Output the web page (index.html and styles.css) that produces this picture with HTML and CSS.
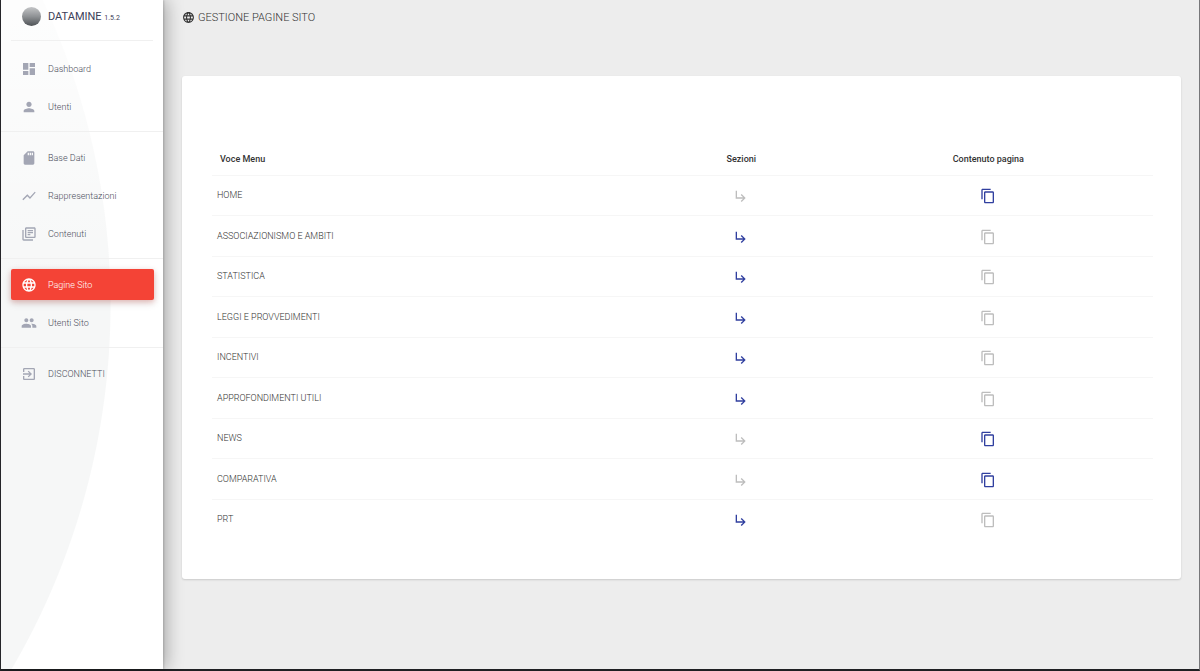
FILE: index.html
```html
<!DOCTYPE html>
<html lang="it">
<head>
  <meta charset="UTF-8">
  <meta name="viewport" content="width=device-width, initial-scale=1.0">
  <title>Datamine - Gestione pagine sito</title>
  <link rel="stylesheet" href="styles.css">
</head>
<body>
  <svg class="sprite" aria-hidden="true">
    <symbol id="i-dashboard" viewBox="0 0 24 24"><path d="M3 13h8V3H3v10zm0 8h8v-6H3v6zm10 0h8V11h-8v10zm0-18v6h8V3h-8z"/></symbol>
    <symbol id="i-person" viewBox="0 0 24 24"><path d="M12 12c2.21 0 4-1.79 4-4s-1.79-4-4-4-4 1.79-4 4 1.79 4 4 4zm0 2c-2.67 0-8 1.34-8 4v2h16v-2c0-2.66-5.33-4-8-4z"/></symbol>
    <symbol id="i-storage" viewBox="0 0 24 24"><path d="M18 2h-8L4.02 8 4 20c0 1.1.9 2 2 2h12c1.1 0 2-.9 2-2V4c0-1.1-.9-2-2-2zm-6 6h-2V4h2v4zm3 0h-2V4h2v4zm3 0h-2V4h2v4z"/></symbol>
    <symbol id="i-chart" viewBox="0 0 24 24"><path d="M3.5 18.49l6-6.01 4 4L22 6.92l-1.41-1.41-7.09 7.97-4-4L2 16.99z"/></symbol>
    <symbol id="i-library" viewBox="0 0 24 24"><path d="M4 6H2v14c0 1.1.9 2 2 2h14v-2H4V6zm16-4H8c-1.1 0-2 .9-2 2v12c0 1.1.9 2 2 2h12c1.1 0 2-.9 2-2V4c0-1.1-.9-2-2-2zm0 14H8V4h12v12zM10 9h8v2h-8V9zm0 3h4v2h-4v-2zm0-6h8v2h-8V6z"/></symbol>
    <symbol id="i-language" viewBox="0 0 24 24"><path d="M11.99 2C6.47 2 2 6.48 2 12s4.47 10 9.99 10C17.52 22 22 17.52 22 12S17.52 2 11.99 2zm6.93 6h-2.95c-.32-1.25-.78-2.45-1.38-3.56 1.84.63 3.37 1.91 4.33 3.56zM12 4.04c.83 1.2 1.48 2.53 1.91 3.96h-3.82c.43-1.43 1.08-2.76 1.91-3.96zM4.26 14C4.1 13.36 4 12.69 4 12s.1-1.36.26-2h3.38c-.08.66-.14 1.32-.14 2s.06 1.34.14 2H4.26zm.82 2h2.95c.32 1.25.78 2.45 1.38 3.56-1.84-.63-3.37-1.9-4.33-3.56zm2.95-8H5.08c.96-1.66 2.49-2.93 4.33-3.56C8.81 5.55 8.35 6.75 8.03 8zM12 19.96c-.83-1.2-1.48-2.53-1.91-3.96h3.82c-.43 1.43-1.08 2.76-1.91 3.96zM14.34 14H9.66c-.09-.66-.16-1.32-.16-2s.07-1.35.16-2h4.68c.09.65.16 1.32.16 2s-.07 1.34-.16 2zm.25 5.56c.6-1.11 1.06-2.31 1.38-3.56h2.95c-.96 1.65-2.49 2.93-4.33 3.56zM16.36 14c.08-.66.14-1.32.14-2s-.06-1.34-.14-2h3.38c.16.64.26 1.31.26 2s-.1 1.36-.26 2h-3.38z"/></symbol>
    <symbol id="i-people" viewBox="0 0 24 24"><path d="M16 11c1.66 0 2.99-1.34 2.99-3S17.66 5 16 5s-3 1.34-3 3 1.34 3 3 3zm-8 0c1.66 0 2.99-1.34 2.99-3S9.66 5 8 5 5 6.34 5 8s1.34 3 3 3zm0 2c-2.33 0-7 1.17-7 3.5V19h14v-2.5c0-2.33-4.67-3.5-7-3.5zm8 0c-.29 0-.62.02-.97.05 1.16.84 1.97 1.97 1.97 3.45V19h6v-2.5c0-2.33-4.67-3.5-7-3.5z"/></symbol>
    <symbol id="i-exit" viewBox="0 0 24 24"><path d="M10.09 15.59L11.5 17l5-5-5-5-1.41 1.41L12.67 11H3v2h9.67l-2.58 2.59zM19 3H5c-1.11 0-2 .9-2 2v4h2V5h14v14H5v-4H3v4c0 1.1.89 2 2 2h14c1.1 0 2-.9 2-2V5c0-1.1-.9-2-2-2z"/></symbol>
    <symbol id="i-sub" viewBox="0 0 24 24"><path d="M19 15l-6 6-1.42-1.42L15.17 16H4V4h2v10h9.17l-3.59-3.58L13 9l6 6z"/></symbol>
    <symbol id="i-copy" viewBox="0 0 24 24"><path d="M16 1H4c-1.1 0-2 .9-2 2v14h2V3h12V1zm3 4H8c-1.1 0-2 .9-2 2v14c0 1.1.9 2 2 2h11c1.1 0 2-.9 2-2V7c0-1.1-.9-2-2-2zm0 16H8V7h11v14z"/></symbol>
  </svg>

  <div class="wrapper">
    <aside class="sidebar">
      <div class="logo">
        <span class="logo-ball"></span>
        <span class="logo-name">DATAMINE <small>1.5.2</small></span>
      </div>
      <nav>
        <ul class="menu">
          <li><a href="#"><svg class="icon"><use href="#i-dashboard"/></svg>Dashboard</a></li>
          <li><a href="#"><svg class="icon"><use href="#i-person"/></svg>Utenti</a></li>
        </ul>
        <ul class="menu">
          <li><a href="#"><svg class="icon"><use href="#i-storage"/></svg>Base Dati</a></li>
          <li><a href="#"><svg class="icon"><use href="#i-chart"/></svg>Rappresentazioni</a></li>
          <li><a href="#"><svg class="icon"><use href="#i-library"/></svg>Contenuti</a></li>
        </ul>
        <ul class="menu">
          <li class="active"><a href="#"><svg class="icon"><use href="#i-language"/></svg>Pagine Sito</a></li>
          <li><a href="#"><svg class="icon"><use href="#i-people"/></svg>Utenti Sito</a></li>
        </ul>
        <ul class="menu">
          <li><a href="#"><svg class="icon"><use href="#i-exit"/></svg>DISCONNETTI</a></li>
        </ul>
      </nav>
    </aside>

    <main class="content">
      <h1 class="title"><svg class="icon"><use href="#i-language"/></svg>GESTIONE PAGINE SITO</h1>

      <div class="card">
        <table class="pages">
          <thead>
            <tr>
              <th class="col-name">Voce Menu</th>
              <th class="col-sections">Sezioni</th>
              <th class="col-page">Contenuto pagina</th>
            </tr>
          </thead>
          <tbody>
            <tr>
              <td>HOME</td>
              <td><button type="button" aria-label="Sezioni" disabled><svg class="icon"><use href="#i-sub"/></svg></button></td>
              <td><button type="button" aria-label="Contenuto pagina"><svg class="icon"><use href="#i-copy"/></svg></button></td>
            </tr>
            <tr>
              <td>ASSOCIAZIONISMO E AMBITI</td>
              <td><button type="button" aria-label="Sezioni"><svg class="icon"><use href="#i-sub"/></svg></button></td>
              <td><button type="button" aria-label="Contenuto pagina" disabled><svg class="icon"><use href="#i-copy"/></svg></button></td>
            </tr>
            <tr>
              <td>STATISTICA</td>
              <td><button type="button" aria-label="Sezioni"><svg class="icon"><use href="#i-sub"/></svg></button></td>
              <td><button type="button" aria-label="Contenuto pagina" disabled><svg class="icon"><use href="#i-copy"/></svg></button></td>
            </tr>
            <tr>
              <td>LEGGI E PROVVEDIMENTI</td>
              <td><button type="button" aria-label="Sezioni"><svg class="icon"><use href="#i-sub"/></svg></button></td>
              <td><button type="button" aria-label="Contenuto pagina" disabled><svg class="icon"><use href="#i-copy"/></svg></button></td>
            </tr>
            <tr>
              <td>INCENTIVI</td>
              <td><button type="button" aria-label="Sezioni"><svg class="icon"><use href="#i-sub"/></svg></button></td>
              <td><button type="button" aria-label="Contenuto pagina" disabled><svg class="icon"><use href="#i-copy"/></svg></button></td>
            </tr>
            <tr>
              <td>APPROFONDIMENTI UTILI</td>
              <td><button type="button" aria-label="Sezioni"><svg class="icon"><use href="#i-sub"/></svg></button></td>
              <td><button type="button" aria-label="Contenuto pagina" disabled><svg class="icon"><use href="#i-copy"/></svg></button></td>
            </tr>
            <tr>
              <td>NEWS</td>
              <td><button type="button" aria-label="Sezioni" disabled><svg class="icon"><use href="#i-sub"/></svg></button></td>
              <td><button type="button" aria-label="Contenuto pagina"><svg class="icon"><use href="#i-copy"/></svg></button></td>
            </tr>
            <tr>
              <td>COMPARATIVA</td>
              <td><button type="button" aria-label="Sezioni" disabled><svg class="icon"><use href="#i-sub"/></svg></button></td>
              <td><button type="button" aria-label="Contenuto pagina"><svg class="icon"><use href="#i-copy"/></svg></button></td>
            </tr>
            <tr>
              <td>PRT</td>
              <td><button type="button" aria-label="Sezioni"><svg class="icon"><use href="#i-sub"/></svg></button></td>
              <td><button type="button" aria-label="Contenuto pagina" disabled><svg class="icon"><use href="#i-copy"/></svg></button></td>
            </tr>
          </tbody>
        </table>
      </div>
    </main>
  </div>
</body>
</html>
```

FILE: styles.css
```css
* {
  box-sizing: border-box;
}

body {
  margin: 0;
  font-family: Roboto, "Liberation Sans", sans-serif;
  font-size: 9px;
  font-weight: 300;
  color: #333;
  background-color: #ededed;
}

.sprite {
  display: none;
}

.icon {
  display: block;
  width: 16px;
  height: 16px;
  fill: currentColor;
}

.wrapper {
  display: flex;
  min-height: 100vh;
  border-left: 1px solid #2a2a2e;
  border-right: 1px solid #77777a;
  border-bottom: 2px solid #1f2023;
}

/* sidebar */
.sidebar {
  flex: 0 0 162px;
  background:
    linear-gradient(rgba(255, 255, 255, 0.8), rgba(255, 255, 255, 0) 300px),
    radial-gradient(circle 720px at -610px 305px, #f6f7f7 719px, #fff 720px);
  box-shadow: 4px 0 16px rgba(0, 0, 0, 0.28), 1px 0 2px rgba(0, 0, 0, 0.15);
}

.logo {
  display: flex;
  align-items: center;
  height: 41px;
  margin: 0 10px;
  padding: 0 0 8px 11px;
  border-bottom: 1px solid #f0f0f0;
}

.logo-ball {
  width: 19px;
  height: 19px;
  margin-right: 7px;
  border-radius: 50%;
  background: linear-gradient(#c4c5c7, #8f9295 50%, #4e5256);
}

.logo-name {
  font-size: 11px;
  font-weight: 400;
  color: #3c4058;
}

.logo-name small {
  font-size: 7px;
  font-weight: 400;
}

.menu {
  display: flex;
  flex-direction: column;
  gap: 7px;
  margin: 0;
  padding: 10px 9px 9px 10px;
  list-style: none;
}

.menu + .menu {
  border-top: 1px solid #f0f0f0;
}

.menu:first-child {
  padding-top: 12px;
}

.menu a {
  display: flex;
  align-items: center;
  gap: 11px;
  height: 31px;
  padding-left: 10px;
  border-radius: 2px;
  color: #4c4f5c;
  text-decoration: none;
}

.menu .icon {
  color: #a3a6b4;
}

.menu .active a {
  color: #fff;
  background-color: #f44336;
  box-shadow: 0 3px 8px rgba(0, 0, 0, 0.14), 0 2px 5px rgba(244, 67, 54, 0.25);
}

.menu .active .icon {
  color: #fff;
}

/* page */
.content {
  flex: 1;
  min-width: 0;
  padding: 0 18px 0 19px;
}

.title {
  display: flex;
  align-items: center;
  gap: 3px;
  height: 34px;
  margin: 0 0 42px;
  font-size: 11px;
  font-weight: 300;
  color: #333;
}

.title .icon {
  width: 13px;
  height: 13px;
}

.card {
  padding: 68px 28px 40px 30px;
  border-radius: 3px;
  background-color: #fff;
  box-shadow: 0 1px 2px rgba(0, 0, 0, 0.15);
}

.pages {
  width: 100%;
  border-collapse: collapse;
  table-layout: fixed;
}

.pages th {
  height: 31px;
  padding: 0;
  font-weight: 500;
  color: #333;
}

.pages .col-name {
  width: 47.5%;
  padding-left: 8px;
  text-align: left;
}

.pages .col-sections {
  width: 17.5%;
}

.pages td {
  height: 40px;
  padding: 0;
  border-top: 1px solid #f6f6f6;
  text-align: center;
}

.pages tr:nth-child(even) td {
  height: 41px;
}

.pages td:first-child {
  padding-left: 5px;
  text-align: left;
}

.pages button {
  display: block;
  margin: 2px auto 0;
  padding: 0;
  border: 0;
  background: none;
  color: #303f9f;
  cursor: pointer;
}

.pages button:disabled {
  color: #bdbdbd;
  cursor: default;
}
```
